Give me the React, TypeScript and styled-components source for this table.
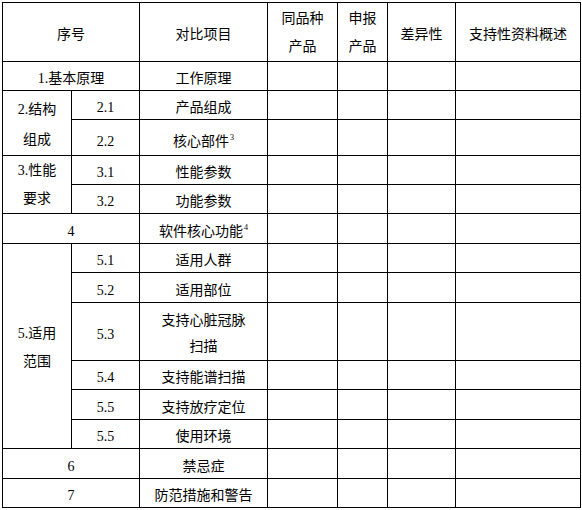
import React from "react";
import styled, { createGlobalStyle } from "styled-components";

const GlobalStyle = createGlobalStyle`
  html, body {
    margin: 0;
    padding: 0;
    background: #ffffff;
  }
`;

const Page = styled.div`
  padding: 2px 0 0 2px;
`;

const Table = styled.table`
  border-collapse: collapse;
  table-layout: fixed;
  width: 578px;
  font-family: "Liberation Serif", "Noto Sans CJK SC", serif;
  font-size: 14px;
  color: #000000;
`;

const Row = styled.tr<{ $h: number }>`
  height: ${(p) => p.$h}px;
`;

// $lh: line height, $pt: top padding (text sits a little under the middle)
const Cell = styled.td<{ $lh?: number; $pt?: number }>`
  border: 1px solid #000000;
  padding: ${(p) => p.$pt ?? 6}px 0 0 0;
  text-align: center;
  vertical-align: middle;
  line-height: ${(p) => p.$lh ?? 16}px;
  white-space: nowrap;
`;

const Note = styled.sup`
  font-size: 8px;
  line-height: 0;
  vertical-align: 6px;
  margin-left: 1px;
`;

const EmptyCells: React.FC = () => (
  <>
    <Cell />
    <Cell />
    <Cell />
    <Cell />
  </>
);

const App: React.FC = () => {
  return (
    <Page>
      <GlobalStyle />
      <Table>
        <colgroup>
          <col style={{ width: 69 }} />
          <col style={{ width: 68 }} />
          <col style={{ width: 128 }} />
          <col style={{ width: 70 }} />
          <col style={{ width: 50 }} />
          <col style={{ width: 68 }} />
          <col style={{ width: 125 }} />
        </colgroup>
        <tbody>
          <Row $h={59}>
            <Cell colSpan={2}>序号</Cell>
            <Cell>对比项目</Cell>
            <Cell $lh={28} $pt={2}>
              同品种
              <br />
              产品
            </Cell>
            <Cell $lh={28} $pt={2}>
              申报
              <br />
              产品
            </Cell>
            <Cell>差异性</Cell>
            <Cell>支持性资料概述</Cell>
          </Row>
          <Row $h={29}>
            <Cell colSpan={2}>1.基本原理</Cell>
            <Cell>工作原理</Cell>
            <EmptyCells />
          </Row>
          <Row $h={29}>
            <Cell rowSpan={2} $lh={30} $pt={3}>
              2.结构
              <br />
              组成
            </Cell>
            <Cell>2.1</Cell>
            <Cell>产品组成</Cell>
            <EmptyCells />
          </Row>
          <Row $h={36}>
            <Cell $pt={8}>2.2</Cell>
            <Cell $pt={8}>
              核心部件<Note>3</Note>
            </Cell>
            <EmptyCells />
          </Row>
          <Row $h={29}>
            <Cell rowSpan={2} $lh={28} $pt={1}>
              3.性能
              <br />
              要求
            </Cell>
            <Cell>3.1</Cell>
            <Cell>性能参数</Cell>
            <EmptyCells />
          </Row>
          <Row $h={29}>
            <Cell>3.2</Cell>
            <Cell>功能参数</Cell>
            <EmptyCells />
          </Row>
          <Row $h={30}>
            <Cell colSpan={2}>4</Cell>
            <Cell>
              软件核心功能<Note>4</Note>
            </Cell>
            <EmptyCells />
          </Row>
          <Row $h={29}>
            <Cell rowSpan={6} $lh={28} $pt={4}>
              5.适用
              <br />
              范围
            </Cell>
            <Cell>5.1</Cell>
            <Cell>适用人群</Cell>
            <EmptyCells />
          </Row>
          <Row $h={30}>
            <Cell>5.2</Cell>
            <Cell>适用部位</Cell>
            <EmptyCells />
          </Row>
          <Row $h={58}>
            <Cell>5.3</Cell>
            <Cell $lh={26} $pt={4}>
              支持心脏冠脉
              <br />
              扫描
            </Cell>
            <EmptyCells />
          </Row>
          <Row $h={29}>
            <Cell>5.4</Cell>
            <Cell>支持能谱扫描</Cell>
            <EmptyCells />
          </Row>
          <Row $h={30}>
            <Cell>5.5</Cell>
            <Cell>支持放疗定位</Cell>
            <EmptyCells />
          </Row>
          <Row $h={29}>
            <Cell>5.5</Cell>
            <Cell>使用环境</Cell>
            <EmptyCells />
          </Row>
          <Row $h={30}>
            <Cell colSpan={2}>6</Cell>
            <Cell>禁忌症</Cell>
            <EmptyCells />
          </Row>
          <Row $h={29}>
            <Cell colSpan={2}>7</Cell>
            <Cell>防范措施和警告</Cell>
            <EmptyCells />
          </Row>
        </tbody>
      </Table>
    </Page>
  );
};

export default App;
